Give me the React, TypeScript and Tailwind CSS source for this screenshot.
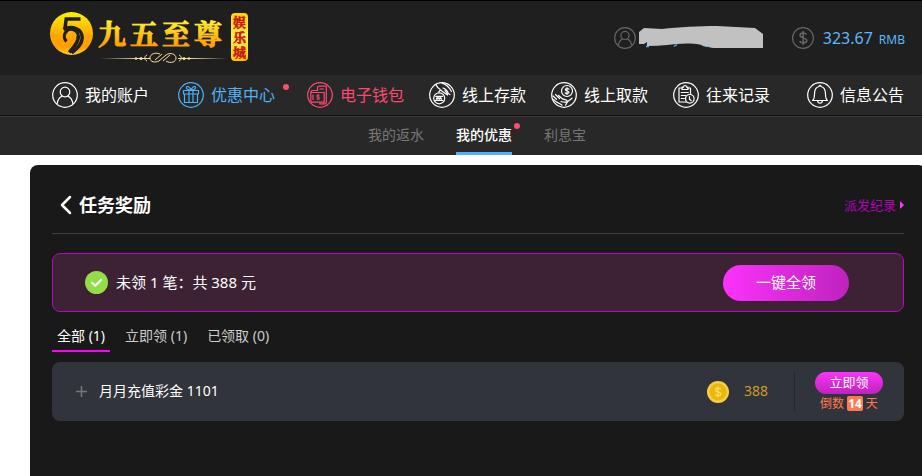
import { ReactNode } from "react";

interface NavItem {
  label: string;
  icon: ReactNode;
  className: string;
  dot?: boolean;
}

interface IconProps {
  children: ReactNode;
}

// Round outline shared by all of the menu icons
function RoundIcon({ children }: IconProps) {
  return (
    <svg
      className="size-[26px] shrink-0"
      viewBox="0 0 26 26"
      fill="none"
      stroke="currentColor"
      strokeWidth="1.2"
      strokeLinecap="round"
      strokeLinejoin="round"
      aria-hidden="true"
    >
      <circle cx="13" cy="13" r="12.3" />
      {children}
    </svg>
  );
}

function UserShape() {
  return (
    <>
      <circle cx="13" cy="10" r="4.8" />
      <path d="M5.2 21.5c.5-3.6 2.3-6.2 5-7.4M20.8 21.5c-.5-3.6-2.3-6.2-5-7.4" />
    </>
  );
}

function GiftShape() {
  return (
    <>
      <path d="M5.5 8.5h15V12h-15zM6.5 12v8.500h13V12M11 8.500v12M15 8.500v12" />
      <path d="M13 8.200C10.500 8 8 7 8.300 5.300c.5-1.800 3.700-.6 4.700 2.900 1-3.500 4.200-4.700 4.700-2.900C18 7 15.500 8 13 8.200z" />
    </>
  );
}

function WalletShape() {
  return (
    <>
      <path d="M3.800 10.500h13.400v9.700H5.500a1.700 1.700 0 0 1-1.700-1.700zM3.800 10.500c0-1.300.8-2 2-2h4" />
      <path d="M10.500 8.500V5.800c0-1 .6-1.600 1.600-1.600h7.200v16.400c0 .8-.6 1.200-1.300 1.200h-5.500M13 7h3.500" />
      <path d="M12 13.200h-1.800v1.900H12v2h-2M6 13v4.500" />
    </>
  );
}

function DepositShape() {
  return (
    <>
      <circle cx="10.200" cy="16.300" r="5.500" />
      <path d="M6.700 14.300h7M6.500 18.500h7.300M7.300 17.300l.8-1.900.9 1.900.9-1.900.9 1.900.9-1.900.8 1.900" />
      <path d="M7 2.500c.8 2.500 2.200 4.200 4.600 5.300L9.800 10M13 1.200c4 1 6.800 3.600 9.500 8.300M14 6c2 .5 3.500 1.500 5 4.500M11.500 8l4 3M16 8.500l2.500 3.500M19 11.500l2 1M15.500 11l3 2" />
    </>
  );
}

function WithdrawShape() {
  return (
    <>
      <circle cx="16" cy="9" r="5.500" />
      <path d="M18 7.200c-.8-.8-3.700-.9-3.700.6 0 1.600 3.700.8 3.700 2.500 0 1.500-3 1.400-3.900.5M16 5.500v7" />
      <path d="M2 14l3.500 3.300M4.500 12.500l4 4M2.700 17.500c2.500 3.800 5.300 2.800 8.300 5.700M7.500 13.500l3.500 3c1.500 1.500 5 .2 5.500 3.200l4.500-3.500M10 19.500c2.300.8 4.500.9 6.500.2M16.500 19.700l-2 3.500" />
    </>
  );
}

function RecordShape() {
  return (
    <>
      <path d="M9 6H6v14h7.500M14.500 6h3v6" />
      <path d="M9 7.500V5.200h1.500c0-2.300 3-2.300 3 0H15v2.300zM8.300 10.500h7M8.300 13.500h4.500M8.300 16.500h3" />
      <circle cx="16.800" cy="16.800" r="4.300" />
      <path d="M16.500 14.500v2.700l1.800 1.500" />
    </>
  );
}

function BellShape() {
  return (
    <>
      <path d="M5.500 18.500c1.700-1.200 2-2.500 2-6.500 0-4.500 2-7 4.500-7.500 0-1.600 2-1.600 2 0 2.500.5 4.500 3 4.500 7.500 0 4 .3 5.300 2 6.500z" />
      <path d="M10.700 19c.2 2.800 4.400 2.800 4.600 0" />
    </>
  );
}

const navItems: NavItem[] = [
  { label: "我的账户", icon: <UserShape />, className: "text-white" },
  { label: "优惠中心", icon: <GiftShape />, className: "ml-1 mr-[7px] text-[#4fb0f5]", dot: true },
  { label: "电子钱包", icon: <WalletShape />, className: "text-[#fb4a72]" },
  { label: "线上存款", icon: <DepositShape />, className: "text-white" },
  { label: "线上取款", icon: <WithdrawShape />, className: "text-white" },
  { label: "往来记录", icon: <RecordShape />, className: "text-white" },
  { label: "信息公告", icon: <BellShape />, className: "ml-auto text-white" },
];

const tabs = [
  { label: "全部", count: 1, className: "border-[#f0f] text-white" },
  { label: "立即领", count: 1, className: "border-transparent text-[#ccc]" },
  { label: "已领取", count: 0, className: "border-transparent text-[#ccc]" },
];

function Logo() {
  return (
    <svg className="h-[54px] w-[200px]" viewBox="0 0 200 54" role="img" aria-label="九五至尊娱乐城">
      <defs>
        <linearGradient id="gold" x1="0" y1="0" x2="0" y2="1">
          <stop offset="0" stopColor="#fff100" />
          <stop offset="0.55" stopColor="#ffa800" />
          <stop offset="0.8" stopColor="#ff9c00" />
          <stop offset="1" stopColor="#ffd21a" />
        </linearGradient>
        <linearGradient id="goldText" gradientUnits="userSpaceOnUse" x1="0" y1="10" x2="0" y2="37">
          <stop offset="0" stopColor="#fff030" />
          <stop offset="1" stopColor="#ff9600" />
        </linearGradient>
        <linearGradient id="badge" x1="0" y1="0" x2="0" y2="1">
          <stop offset="0" stopColor="#ffd400" />
          <stop offset="0.5" stopColor="#fff04a" />
          <stop offset="1" stopColor="#ffc400" />
        </linearGradient>
        <linearGradient id="rule" gradientUnits="userSpaceOnUse" x1="50" y1="0" x2="178" y2="0">
          <stop offset="0" stopColor="#f6e29a" stopOpacity="0" />
          <stop offset="0.3" stopColor="#f6e29a" />
          <stop offset="0.7" stopColor="#f6e29a" />
          <stop offset="1" stopColor="#f6e29a" stopOpacity="0" />
        </linearGradient>
      </defs>
      <circle cx="21.500" cy="22.500" r="21.500" fill="url(#gold)" />
      <g fill="none" stroke="#1f1f1f">
        <path d="M30.500 8H16.200l-1.200 9.500" strokeWidth="3.500" />
        <path d="M13.500 18.500c8-4.500 19-1 18.700 8.500-.2 6-4.500 10-10.700 15" strokeWidth="3.500" />
        <path d="M16.500 30.500a7 7 0 1 1 11.500-3" strokeWidth="3.200" />
        <path d="M28.300 25c.5 5-3 9-9 16.500" strokeWidth="3.500" />
      </g>
      <text
        x="48 80 112 144"
        y="34"
        fill="url(#goldText)"
        stroke="url(#goldText)"
        strokeWidth="1"
        className="font-['Noto_Serif_CJK_SC','Noto_Sans_CJK_SC',serif] text-[28px] font-bold"
      >
        九五至尊
      </text>
      <path d="M50 47h50v1H50zM128 47h50v1h-50z" fill="url(#rule)" />
      <path
        d="M110 43c-5-2-10 0-10 4s5 5 9 3l7-6c4-3 10-1 10 3s-5 6-10 3M97 44c-3 1-3 5 0 6M129 44c3 1 3 5 0 6M105 49l7-6M113 50l7-6"
        fill="none"
        stroke="#f6e29a"
      />
      <g fill="#f6e29a">
        <circle cx="86" cy="47.500" r="1.200" />
        <circle cx="91" cy="47.500" r="1.500" />
        <circle cx="134" cy="47.500" r="1.500" />
        <circle cx="139" cy="47.500" r="1.200" />
      </g>
      <rect x="181" y="2" width="17" height="48" rx="4" fill="url(#badge)" />
      <text
        x="183 183 183"
        y="16 31 46"
        fill="#c8100a"
        stroke="#c8100a"
        strokeWidth="0.5"
        className="font-['Noto_Serif_CJK_SC','Noto_Sans_CJK_SC',serif] text-[13px] font-bold"
      >
        娱乐城
      </text>
    </svg>
  );
}

function Header() {
  return (
    <header className="flex h-[75px] items-center border-t border-black bg-[#1f1f1f] pl-[50px] pr-[17px]">
      <a href="#home">
        <Logo />
      </a>
      <div className="ml-auto flex items-center text-[#666]">
        <svg className="size-[22px]" viewBox="0 0 26 26" fill="none" stroke="currentColor" strokeWidth="1.400" aria-hidden="true">
          <circle cx="13" cy="13" r="12.200" />
          <UserShape />
        </svg>
        <svg className="ml-[3px] h-6 w-[125px]" viewBox="0 0 125 24" aria-hidden="true">
          <path d="M7 20.500h3M35 20.500l3-2M63 19l5 1.500" stroke="#4fb0f5" strokeWidth="1.500" />
          <path d="M0 6l5-4 18 1C40 1 60 0 78 0l38 2 8 6v14H75C68 22 64 17 48 17.500c-14 .5-26 2.500-40 2.500v-4l-3 2H0z" fill="#c1c1c1" />
        </svg>
        <svg className="ml-7 size-[22px]" viewBox="0 0 22 22" fill="none" stroke="currentColor" aria-hidden="true">
          <circle cx="11" cy="11" r="10.400" strokeWidth="1.200" />
          <path d="M14.500 7.500C13 5.300 8 5.500 8 8.200c0 3.300 6.800 2 6.800 5.300 0 2.900-5.500 3.100-7.300.7M11.200 4v14" strokeWidth="1.500" />
        </svg>
        <p className="ml-[9px] flex items-baseline gap-1.5 text-base leading-6 text-[#5bb8fa]">
          323.67 <span className="text-xs">RMB</span>
        </p>
      </div>
    </header>
  );
}

function MainNav() {
  return (
    <nav className="flex h-10 items-center gap-[25px] bg-[#282828] pl-[52px] pr-[18px]">
      {navItems.map((item) => (
        <a key={item.label} href="#nav" className={`relative flex shrink-0 items-center gap-[7px] text-base leading-6 ${item.className}`}>
          <RoundIcon>{item.icon}</RoundIcon>
          {item.label}
          {item.dot && <span className="absolute -right-3.5 top-0.5 size-1.5 rounded-full bg-[#ff4d6d]" />}
        </a>
      ))}
    </nav>
  );
}

function SubNav() {
  return (
    <nav className="flex h-10 justify-center gap-8 border-t border-[#111] bg-[#282828] pl-8 text-sm text-[#777] shadow-[inset_0_1px_#383838]">
      <a href="#rebate" className="flex items-center border-b-3 border-transparent pt-0.5">
        我的返水
      </a>
      <a href="#offers" className="relative flex items-center border-b-3 border-[#4fb0f5] pt-0.5 font-medium text-white">
        我的优惠
        <span className="absolute -right-2 top-[7px] size-1.5 rounded-full bg-[#ff4d6d]" />
      </a>
      <a href="#interest" className="flex items-center border-b-3 border-transparent pt-0.5">
        利息宝
      </a>
    </nav>
  );
}

function RewardRow() {
  return (
    <article className="mt-2.5 flex h-[59px] items-center rounded-lg bg-[#31343b] pl-6 pr-[21px] text-sm">
      <button type="button" aria-label="展开" className="text-[#777]">
        <svg className="size-[11px]" viewBox="0 0 11 11" stroke="currentColor" strokeWidth="1.500">
          <path d="M5.500 0v11M0 5.500h11" />
        </svg>
      </button>
      <h2 className="ml-3 pb-0.5 text-white">月月充值彩金 1101</h2>
      <svg className="ml-auto size-[22px]" viewBox="0 0 22 22" aria-hidden="true">
        <circle cx="11" cy="11" r="11" fill="#f7cf45" />
        <circle cx="11" cy="11" r="8.500" fill="#eab70e" />
        <path d="M13.800 8.300c-1-1.700-5.300-1.600-5.300.6 0 2.500 5.300 1.400 5.300 4 0 2.400-4.600 2.400-5.700.5M11 5.500v11" fill="none" stroke="#f9dc62" strokeWidth="1.300" />
      </svg>
      <span className="ml-[15px] pb-0.5 text-[#cf9a2b]">388</span>
      <div className="ml-[26px] flex h-[39px] flex-col items-center justify-center border-l border-[#25272d] pl-5">
        <button type="button" className="h-6 w-[68px] rounded-full bg-linear-to-b from-[#fb33fb] to-[#bf22bf] pb-0.5 text-[13px] leading-5 text-white">
          立即领
        </button>
        <p className="mt-0.5 flex items-center gap-[3px] text-xs leading-4 text-[#ff7a50]">
          倒数
          <span className="rounded-xs bg-[#ff7a50] px-px text-xs leading-[15px] font-bold text-white">14</span>
          天
        </p>
      </div>
    </article>
  );
}

export default function App() {
  return (
    <div className="flex min-h-screen flex-col overflow-hidden bg-white font-['Noto_Sans','Noto_Sans_CJK_SC',sans-serif]">
      <Header />
      <MainNav />
      <SubNav />
      <main className="-mr-1 ml-[30px] mt-2.5 flex-1 rounded-t-lg bg-[#191919] px-[22px] pt-5">
        <div className="flex h-[49px] items-center justify-between border-b border-[#443c42] pb-2">
          <h1 className="flex items-center gap-[7px] pl-2 text-lg leading-6 font-bold text-white">
            <svg className="h-5 w-3" viewBox="0 0 12 20" fill="none" stroke="currentColor" strokeWidth="2.500" strokeLinecap="round" strokeLinejoin="round" aria-hidden="true">
              <path d="M10 2L2 10l8 8" />
            </svg>
            任务奖励
          </h1>
          <a href="#history" className="flex items-center gap-1 text-[13px] leading-5 text-[#b000b8]">
            派发纪录
            <svg className="h-2 w-1" viewBox="0 0 4 8" fill="#ff33ff" aria-hidden="true">
              <path d="M0 0l4 4-4 4z" />
            </svg>
          </a>
        </div>

        <section className="mt-[19px] flex h-[59px] items-center rounded-lg border border-[#b608c4] bg-[#3d2233] pl-8 pr-[54px] text-[15px] text-white">
          <svg className="size-[23px]" viewBox="0 0 23 23" aria-hidden="true">
            <circle cx="11.500" cy="11.500" r="11.500" fill="#93dd46" />
            <path d="M7 11.800l3.200 3 5.800-5.800" fill="none" stroke="#fff" strokeWidth="2.200" strokeLinecap="round" strokeLinejoin="round" />
          </svg>
          <p className="ml-2">未领 1 笔：共 388 元</p>
          <button type="button" className="ml-auto h-9 w-[126px] rounded-full bg-linear-to-r from-[#fb33fb] to-[#bf22bf]">
            一键全领
          </button>
        </section>

        <div role="tablist" className="mt-2.5 flex gap-2.5 text-sm">
          {tabs.map((tab, index) => (
            <button
              key={tab.label}
              type="button"
              role="tab"
              aria-selected={index === 0}
              className={`h-[30px] border-b-2 px-[5px] ${tab.className}`}
            >
              {tab.label} ({tab.count})
            </button>
          ))}
        </div>

        <RewardRow />
      </main>
    </div>
  );
}
